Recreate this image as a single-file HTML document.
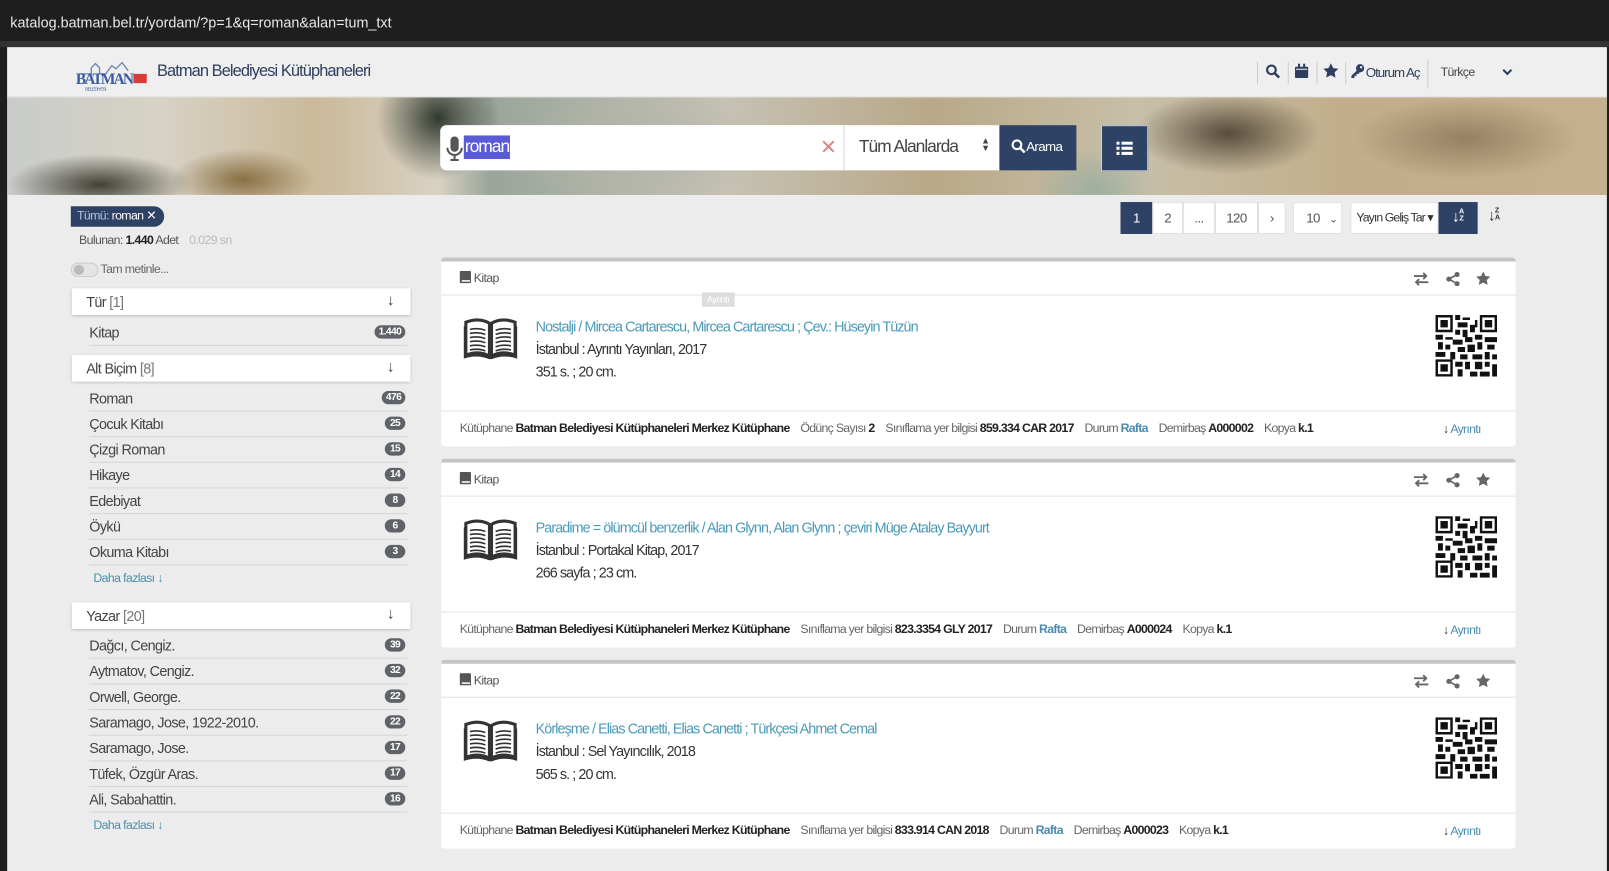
<!DOCTYPE html>
<html><head><meta charset="utf-8">
<style>
*{box-sizing:border-box;margin:0;padding:0}
body{width:1609px;height:849px;overflow:hidden;background:#1e1e1e;font-family:"Liberation Sans",sans-serif;color:#333;font-size:13px;position:relative;letter-spacing:-0.6px}
#wrap{position:absolute;left:0;top:0;width:1568px;height:828px;transform:scale(1.0261);transform-origin:0 0}
.a{position:absolute}
#page{left:7px;top:46px;width:1559px;height:803px;background:#ececec;overflow:hidden}
.url{left:10px;top:14px;color:#e8e8e8;font-size:14px;letter-spacing:0}
.hdr{left:0;top:0;width:1559px;height:49px;background:#efefef;border-bottom:1px solid #ddd}
.banner{left:0;top:49px;width:1559px;height:95px;
background:
radial-gradient(ellipse 90px 30px at 90px 85px,rgba(40,40,30,.85),transparent),
radial-gradient(ellipse 70px 30px at 230px 80px,rgba(120,90,40,.8),transparent),
radial-gradient(ellipse 60px 60px at 420px 20px,rgba(30,40,30,.9),transparent),
radial-gradient(ellipse 120px 60px at 620px 50px,rgba(180,180,170,.8),transparent),
radial-gradient(ellipse 90px 40px at 1190px 35px,rgba(60,50,35,.8),transparent),
radial-gradient(ellipse 110px 40px at 1420px 40px,rgba(120,100,70,.6),transparent),
radial-gradient(ellipse 60px 40px at 1060px 90px,rgba(140,170,160,.7),transparent),
linear-gradient(90deg,#c9cccb 0,#d7d2c4 150px,#cbb99a 300px,#d8d2c3 420px,#9aa59b 470px,#c6c2b4 700px,#b9a888 900px,#c7bfa8 1100px,#c2ae8c 1300px,#c4b08e 1559px)}
.search{left:422px;top:76px;width:393px;height:44px;background:#fff;border-radius:6px 0 0 6px}
.sel{left:815px;top:76px;width:152px;height:44px;background:#fff;border-left:1px solid #ddd;font-size:17px;color:#444;padding:11px 14px}
.btn{background:#2e4266;color:#fff}
.fh{background:#fff;height:26px;box-shadow:0 1px 3px rgba(0,0,0,.25);padding:5px 14px;font-size:14px;color:#444;position:absolute;left:63px;width:330px}
.fh span{color:#777}
.fh i{position:absolute;right:16px;top:3px;font-style:normal;font-size:15px;color:#444}
.it{position:absolute;left:80px;width:310px;height:25px;border-bottom:1px solid #d6d6d6;font-size:14px;color:#444;padding:4px 0 0 0}
.it b{position:absolute;right:2px;top:5px;background:#5f6368;color:#fff;font-size:10px;border-radius:8px;padding:1px 4px;min-width:20px;text-align:center;font-weight:bold}
.more{position:absolute;left:84px;color:#4a90b0;font-size:12px}
.card{position:absolute;left:423px;width:1047px;height:184px;background:#fff;border-top:4px solid #c5c5c5;border-radius:3px}
.ch{height:33px;border-bottom:1px solid #e3e3e3;padding:9px 18px;font-size:12px;color:#555}
.ct{position:absolute;left:92px;top:52px;font-size:14px;line-height:22px;color:#333;letter-spacing:-0.9px}
.ct a{color:#4a9ab8;text-decoration:none}
.cf{position:absolute;left:0;top:145px;width:100%;height:35px;border-top:1px solid #e3e3e3;padding:9px 18px;font-size:12px;color:#666;white-space:nowrap;letter-spacing:-0.7px}
.cf b{color:#222}
.cf em{font-style:normal;color:#4a8cb0;font-weight:bold}
.cf .ay{position:absolute;right:34px;top:10px;color:#4a8cb0}
.pg{position:absolute;top:151px;height:31px;background:#fff;border:1px solid #e0e0e0;text-align:center;padding-top:7px;font-size:13px;color:#555;white-space:nowrap}
.stk{display:inline-block;font-size:7px;line-height:7px;font-weight:bold;vertical-align:1px;letter-spacing:0}
</style></head><body>
<div id="wrap">
<div class="a url">katalog.batman.bel.tr/yordam/?p=1&amp;q=roman&amp;alan=tum_txt</div>
<div class="a" style="left:0;top:40px;width:1568px;height:6px;background:#333"></div>
<div class="a" id="page">
 <div class="a hdr">
  <svg class="a" style="left:66px;top:6px" width="72" height="38" viewBox="0 0 72 38">
   <path d="M4 20h12v-6l4-4 4 4v6h6l6-8 4 3 6-6 6 8" fill="none" stroke="#6d86b5" stroke-width="1.3"/>
   <text x="1" y="30" font-family="Liberation Serif" font-weight="bold" font-size="15" fill="#3b5aa0" textLength="56">BATMAN</text>
   <rect x="57" y="20" width="13" height="9" fill="#d93a3a"/>
   <text x="10" y="36" font-size="4.5" fill="#3b5aa0" font-family="Liberation Sans">BELEDİYESİ</text>
  </svg>
  <div class="a" style="left:146px;top:15px;font-size:16px;color:#2e3e5e;letter-spacing:-0.9px">Batman Belediyesi Kütüphaneleri</div>
  <div class="a" style="left:1218px;top:14px;width:1px;height:22px;background:#ccc"></div>
  <svg class="a" style="left:1226px;top:16px" width="15" height="15" viewBox="0 0 16 16"><circle cx="6.5" cy="6.5" r="4.5" fill="none" stroke="#2e3e5e" stroke-width="2.2"/><path d="M10 10l4.5 4.5" stroke="#2e3e5e" stroke-width="2.6"/></svg>
  <div class="a" style="left:1248px;top:14px;width:1px;height:22px;background:#ccc"></div>
  <svg class="a" style="left:1255px;top:16px" width="13" height="14" viewBox="0 0 13 14"><rect x="0" y="3" width="13" height="11" rx="1" fill="#2e3e5e"/><rect x="3" y="0" width="2" height="4" fill="#2e3e5e"/><rect x="8" y="0" width="2" height="4" fill="#2e3e5e"/><rect x="1" y="5" width="11" height="1" fill="#efefef"/></svg>
  <div class="a" style="left:1276px;top:14px;width:1px;height:22px;background:#ccc"></div>
  <svg class="a" style="left:1282px;top:15px" width="16" height="16" viewBox="0 0 24 24"><path d="M12 1l3.4 7 7.6 1-5.5 5.3 1.3 7.6L12 18.3 5.2 21.9l1.3-7.6L1 9l7.6-1z" fill="#2e3e5e"/></svg>
  <div class="a" style="left:1304px;top:14px;width:1px;height:22px;background:#ccc"></div>
  <svg class="a" style="left:1309px;top:16px" width="14" height="14" viewBox="0 0 14 14"><circle cx="9.5" cy="4.5" r="4" fill="#2e3e5e"/><path d="M7 6L1 12v2h3v-2h2v-2h2l1-1" fill="#2e3e5e"/><circle cx="10.5" cy="3.5" r="1.2" fill="#efefef"/></svg>
  <div class="a" style="left:1324px;top:17px;font-size:13px;color:#2e3e5e;letter-spacing:-1px">Oturum Aç</div>
  <div class="a" style="left:1384px;top:12px;width:1px;height:28px;background:#ccc"></div>
  <div class="a" style="left:1397px;top:17px;font-size:12px;color:#444">Türkçe</div>
  <svg class="a" style="left:1457px;top:20px" width="10" height="8" viewBox="0 0 10 8"><path d="M1 2l4 4 4-4" fill="none" stroke="#2e3e5e" stroke-width="2"/></svg>
 </div>
 <div class="a banner"></div>
 <div class="a search">
  <svg class="a" style="left:6px;top:11px" width="16" height="24" viewBox="0 0 16 24"><rect x="4" y="0" width="8" height="15" rx="4" fill="#555"/><path d="M1 11a7 7 0 0 0 14 0" fill="none" stroke="#555" stroke-width="2"/><path d="M8 18v5M4 23h8" stroke="#555" stroke-width="2"/></svg>
  <div class="a" style="left:23px;top:10px;height:23px;background:#5b5bd6;color:#fff;font-size:17px;padding:1px 1px;letter-spacing:-1px">roman</div>
  <div class="a" style="left:370px;top:9px;color:#d88;font-size:20px;font-family:'DejaVu Sans'">✕</div>
 </div>
 <div class="a sel" style="letter-spacing:-1px">Tüm Alanlarda<span class="a" style="right:10px;top:12px;font-size:9px;line-height:7px;color:#444">▲<br>▼</span></div>
 <div class="a btn" style="left:967px;top:76px;width:75px;height:44px;padding:13px 0 0 11px;font-size:13px">
  <svg style="vertical-align:-3px" width="15" height="15" viewBox="0 0 16 16"><circle cx="6.5" cy="6.5" r="4.5" fill="none" stroke="#fff" stroke-width="2.2"/><path d="M10 10l4.5 4.5" stroke="#fff" stroke-width="2.6"/></svg>Arama</div>
 <div class="a btn" style="left:1066px;top:76px;width:46px;height:45px;border:1px solid #ccd">
  <svg class="a" style="left:14px;top:15px" width="16" height="13" viewBox="0 0 16 13"><g fill="#fff"><rect x="0" y="0" width="3" height="3"/><rect x="5" y="0" width="11" height="3"/><rect x="0" y="5" width="3" height="3"/><rect x="5" y="5" width="11" height="3"/><rect x="0" y="10" width="3" height="3"/><rect x="5" y="10" width="11" height="3"/></g></svg>
 </div>

 <div class="a" style="left:62px;top:155px;height:20px;background:#2e4266;color:#fff;border-radius:0 10px 10px 0;padding:2px 8px 0 6px;font-size:12px"><span style="color:#b8c4da">Tümü:</span> roman ✕</div>
 <div class="a" style="left:70px;top:181px;font-size:12px;color:#555">Bulunan: <b style="color:#222">1.440</b> Adet <span style="color:#bbb;margin-left:8px">0.029 sn</span></div>
 <div class="a" style="left:62px;top:210px;width:27px;height:14px;border-radius:7px;background:#e4e4e4;border:1px solid #ccc"><div class="a" style="left:2px;top:1px;width:10px;height:10px;border-radius:5px;background:#bbb"></div></div>
 <div class="a" style="left:91px;top:209px;font-size:12px;color:#666">Tam metinle...</div>

 <div class="fh" style="top:235px">Tür <span>[1]</span><i>↓</i></div>
 <div class="it" style="top:266px">Kitap<b>1.440</b></div>
 <div class="fh" style="top:300px">Alt Biçim <span>[8]</span><i>↓</i></div>
 <div class="it" style="top:330px">Roman<b>476</b></div>
 <div class="it" style="top:355px">Çocuk Kitabı<b>25</b></div>
 <div class="it" style="top:380px">Çizgi Roman<b>15</b></div>
 <div class="it" style="top:405px">Hikaye<b>14</b></div>
 <div class="it" style="top:430px">Edebiyat<b>8</b></div>
 <div class="it" style="top:455px">Öykü<b>6</b></div>
 <div class="it" style="top:480px">Okuma Kitabı<b>3</b></div>
 <div class="more" style="top:510px">Daha fazlası <b>↓</b></div>
 <div class="fh" style="top:541px">Yazar <span>[20]</span><i>↓</i></div>
 <div class="it" style="top:571px">Dağcı, Cengiz.<b>39</b></div>
 <div class="it" style="top:596px">Aytmatov, Cengiz.<b>32</b></div>
 <div class="it" style="top:621px">Orwell, George.<b>22</b></div>
 <div class="it" style="top:646px">Saramago, Jose, 1922-2010.<b>22</b></div>
 <div class="it" style="top:671px">Saramago, Jose.<b>17</b></div>
 <div class="it" style="top:696px">Tüfek, Özgür Aras.<b>17</b></div>
 <div class="it" style="top:721px">Ali, Sabahattin.<b>16</b></div>
 <div class="more" style="top:751px">Daha fazlası <b>↓</b></div>

 <div class="pg" style="left:1085px;width:31px;background:#2e4266;color:#fff;border-color:#2e4266">1</div>
 <div class="pg" style="left:1116px;width:30px">2</div>
 <div class="pg" style="left:1146px;width:31px">...</div>
 <div class="pg" style="left:1177px;width:42px">120</div>
 <div class="pg" style="left:1219px;width:27px">›</div>
 <div class="pg" style="left:1253px;width:48px;text-align:left;padding-left:12px">10 <span style="font-size:10px;margin-left:6px">⌄</span></div>
 <div class="pg" style="left:1309px;width:86px;font-size:12px;color:#333;letter-spacing:-0.9px">Yayın Geliş Tar ▾</div>
 <div class="pg" style="left:1395px;width:38px;background:#2e4266;color:#fff;border-color:#2e4266;font-weight:bold;font-size:15px;padding-top:5px">↓<span class="stk">A<br>Z</span></div>
 <div class="a" style="left:1443px;top:156px;font-size:15px;color:#333;font-weight:bold">↓<span class="stk">Z<br>A</span></div>

 <svg width="0" height="0" style="position:absolute">
  <defs>
   <symbol id="qr" viewBox="0 0 25 25">
    <g fill="#111">
     <path d="M0 0h7v7h-7zM1 1v5h5v-5zM2 2h3v3h-3z" fill-rule="evenodd"/>
     <path d="M18 0h7v7h-7zM19 1v5h5v-5zM20 2h3v3h-3z" fill-rule="evenodd"/>
     <path d="M0 18h7v7h-7zM1 19v5h5v-5zM2 20h3v3h-3z" fill-rule="evenodd"/>
     <path d="M8 0h2v2h-2zM11 1h3v1h-3zM9 3h4v2h-4zM14 4h2v3h-2zM8 6h2v2h-2zM11 6h2v3h-2zM0 8h3v2h-3zM4 9h3v1h-3zM7 10h4v2h-4zM12 9h3v2h-3zM16 8h3v2h-3zM20 9h5v2h-5zM1 11h2v3h-2zM4 12h2v2h-2zM9 13h3v2h-3zM13 12h3v3h-3zM17 11h2v3h-2zM21 12h3v2h-3zM0 15h4v2h-4zM6 15h2v3h-2zM10 16h3v2h-3zM15 16h4v2h-4zM20 15h2v3h-2zM23 16h2v2h-2zM8 19h3v2h-3zM12 19h2v3h-2zM16 19h3v3h-3zM20 19h2v2h-2zM23 20h2v5h-2zM9 22h2v3h-2zM14 23h3v2h-3zM18 23h4v2h-4zM16 2h1v3h-1z"/>
    </g>
   </symbol>
   <symbol id="book" viewBox="0 0 52 40">
    <path d="M2 4c8-3 16-3 23 1v32c-7-4-15-4-23-1z M27 5c7-4 15-4 23-1v32c-8-3-16-3-23 1z" fill="#fff" stroke="#333" stroke-width="3"/>
    <path d="M0 8v30c9-3 17-3 26 1 9-4 17-4 26-1v-30" fill="none" stroke="#333" stroke-width="3"/>
    <path d="M6 11c5-1 10-1 15 1M6 15c5-1 10-1 15 1M6 19c5-1 10-1 15 1M6 23c5-1 10-1 15 1M6 27c5-1 10-1 15 1M6 31c5-1 10-1 15 1M31 12c5-2 10-2 15-1M31 16c5-2 10-2 15-1M31 20c5-2 10-2 15-1M31 24c5-2 10-2 15-1M31 28c5-2 10-2 15-1M31 32c5-2 10-2 15-1" stroke="#333" stroke-width="1.6" fill="none"/>
   </symbol>
   <symbol id="ex" viewBox="0 0 16 14"><path d="M1 4h12M10 1l3 3-3 3M15 10H3M6 7l-3 3 3 3" fill="none" stroke="#666" stroke-width="1.8"/></symbol>
   <symbol id="sh" viewBox="0 0 14 14"><circle cx="11" cy="2.5" r="2.5" fill="#666"/><circle cx="3" cy="7" r="2.5" fill="#666"/><circle cx="11" cy="11.5" r="2.5" fill="#666"/><path d="M11 2.5L3 7l8 4.5" stroke="#666" stroke-width="1.6" fill="none"/></symbol>
   <symbol id="st" viewBox="0 0 24 24"><path d="M12 1l3.4 7 7.6 1-5.5 5.3 1.3 7.6L12 18.3 5.2 21.9l1.3-7.6L1 9l7.6-1z" fill="#666"/></symbol>
   <symbol id="kb" viewBox="0 0 11 12"><rect x="0" y="0" width="11" height="12" rx="1" fill="#555"/><rect x="2" y="9" width="8" height="1.5" fill="#fff"/></symbol>
  </defs>
 </svg>

 <div class="card" style="top:205px">
  <div class="ch"><svg width="11" height="12" style="vertical-align:-1px"><use href="#kb"/></svg> Kitap</div>
  <svg class="a" style="right:84px;top:10px" width="16" height="14"><use href="#ex"/></svg><svg class="a" style="right:54px;top:10px" width="14" height="14"><use href="#sh"/></svg><svg class="a" style="right:24px;top:9px" width="15" height="15"><use href="#st"/></svg>
  <div class="a" style="left:254px;top:30px;background:#ddd;color:#fff;font-size:9px;padding:2px 5px">Ayrıntı</div>
  <svg class="a" style="left:22px;top:55px" width="52" height="40"><use href="#book"/></svg>
  <div class="ct"><a>Nostalji / Mircea Cartarescu, Mircea Cartarescu ; Çev.: Hüseyin Tüzün</a><br>İstanbul : Ayrıntı Yayınları, 2017<br>351 s. ; 20 cm.</div>
  <svg class="a" style="left:969px;top:52px" width="60" height="60"><use href="#qr"/></svg>
  <div class="cf">Kütüphane <b>Batman Belediyesi Kütüphaneleri Merkez Kütüphane</b> &nbsp;&nbsp; Ödünç Sayısı <b>2</b> &nbsp;&nbsp; Sınıflama yer bilgisi <b>859.334 CAR 2017</b> &nbsp;&nbsp; Durum <em>Rafta</em> &nbsp;&nbsp; Demirbaş <b>A000002</b> &nbsp;&nbsp; Kopya <b>k.1</b><span class="ay"><b>↓</b> Ayrıntı</span></div>
 </div>
 <div class="card" style="top:401px">
  <div class="ch"><svg width="11" height="12" style="vertical-align:-1px"><use href="#kb"/></svg> Kitap</div>
  <svg class="a" style="right:84px;top:10px" width="16" height="14"><use href="#ex"/></svg><svg class="a" style="right:54px;top:10px" width="14" height="14"><use href="#sh"/></svg><svg class="a" style="right:24px;top:9px" width="15" height="15"><use href="#st"/></svg>
  <svg class="a" style="left:22px;top:55px" width="52" height="40"><use href="#book"/></svg>
  <div class="ct"><a>Paradime = ölümcül benzerlik / Alan Glynn, Alan Glynn ; çeviri Müge Atalay Bayyurt</a><br>İstanbul : Portakal Kitap, 2017<br>266 sayfa ; 23 cm.</div>
  <svg class="a" style="left:969px;top:52px" width="60" height="60"><use href="#qr"/></svg>
  <div class="cf">Kütüphane <b>Batman Belediyesi Kütüphaneleri Merkez Kütüphane</b> &nbsp;&nbsp; Sınıflama yer bilgisi <b>823.3354 GLY 2017</b> &nbsp;&nbsp; Durum <em>Rafta</em> &nbsp;&nbsp; Demirbaş <b>A000024</b> &nbsp;&nbsp; Kopya <b>k.1</b><span class="ay"><b>↓</b> Ayrıntı</span></div>
 </div>
 <div class="card" style="top:597px">
  <div class="ch"><svg width="11" height="12" style="vertical-align:-1px"><use href="#kb"/></svg> Kitap</div>
  <svg class="a" style="right:84px;top:10px" width="16" height="14"><use href="#ex"/></svg><svg class="a" style="right:54px;top:10px" width="14" height="14"><use href="#sh"/></svg><svg class="a" style="right:24px;top:9px" width="15" height="15"><use href="#st"/></svg>
  <svg class="a" style="left:22px;top:55px" width="52" height="40"><use href="#book"/></svg>
  <div class="ct"><a>Körleşme / Elias Canetti, Elias Canetti ; Türkçesi Ahmet Cemal</a><br>İstanbul : Sel Yayıncılık, 2018<br>565 s. ; 20 cm.</div>
  <svg class="a" style="left:969px;top:52px" width="60" height="60"><use href="#qr"/></svg>
  <div class="cf">Kütüphane <b>Batman Belediyesi Kütüphaneleri Merkez Kütüphane</b> &nbsp;&nbsp; Sınıflama yer bilgisi <b>833.914 CAN 2018</b> &nbsp;&nbsp; Durum <em>Rafta</em> &nbsp;&nbsp; Demirbaş <b>A000023</b> &nbsp;&nbsp; Kopya <b>k.1</b><span class="ay"><b>↓</b> Ayrıntı</span></div>
 </div>
</div>
</div>
</body></html>
